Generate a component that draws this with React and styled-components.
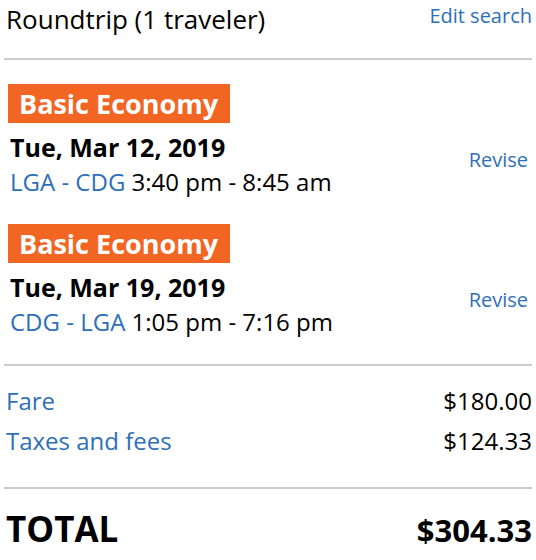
import React from 'react'
import styled, { createGlobalStyle } from 'styled-components'

const GlobalStyle = createGlobalStyle`
  body {
    margin: 0;
    background: #fff;
    font-family: "Open Sans", "Noto Sans", sans-serif;
    color: #000;
  }
`

const Page = styled.div`
  width: 536px;
  padding: 0 4px;
  box-sizing: border-box;
`

const Header = styled.div`
  display: flex;
  justify-content: space-between;
  align-items: flex-start;
  box-sizing: border-box;
  height: 58px;
  padding: 1px 0 0 2px;
`

const Title = styled.div`
  font-size: 26px;
  line-height: 36px;
`

const Link = styled.a`
  color: #2e6fb9;
  font-size: 20px;
  line-height: 28px;
  text-decoration: none;
  cursor: pointer;
`

const EditLink = styled(Link)`
  margin-top: 1px;
`

const Divider = styled.hr`
  margin: 0;
  border: none;
  height: 2px;
  background: #cccccc;
`

const Segments = styled.div`
  display: flex;
  flex-direction: column;
  gap: 25px;
  padding: 24px 0 25px 4px;
`

const Segment = styled.div`
  display: flex;
  justify-content: space-between;
  align-items: flex-start;
`

const Badge = styled.div`
  display: inline-block;
  background: #f26522;
  color: #fff;
  font-weight: 700;
  font-size: 27px;
  line-height: 39px;
  padding: 0 12px 0 11px;
`

const DateLine = styled.div`
  font-weight: 700;
  font-size: 25px;
  line-height: 36px;
  margin-top: 6px;
  padding-left: 2px;
`

const Route = styled.div`
  font-size: 24px;
  line-height: 34px;
  padding-left: 2px;
`

const Airports = styled.span`
  color: #2e6fb9;
`

const Revise = styled(Link)`
  margin-top: 62px;
  margin-right: 4px;
`

const Charges = styled.div`
  padding: 15px 0 26px 2px;
`

const ChargeRow = styled.div`
  display: flex;
  justify-content: space-between;
  font-size: 24px;
  line-height: 40px;
`

const ChargeLabel = styled.span`
  color: #2e6fb9;
`

const TotalRow = styled.div`
  display: flex;
  justify-content: space-between;
  align-items: baseline;
  font-weight: 700;
  line-height: 50px;
  padding: 15px 0 0 2px;
`

const TotalLabel = styled.span`
  font-size: 35px;
`

const TotalAmount = styled.span`
  font-size: 31px;
`

const segments = [
  { date: 'Tue, Mar 12, 2019', route: 'LGA - CDG', time: '3:40 pm - 8:45 am' },
  { date: 'Tue, Mar 19, 2019', route: 'CDG - LGA', time: '1:05 pm - 7:16 pm' },
]

const App = () => {
  return (
    <Page>
      <GlobalStyle />
      <Header>
        <Title>Roundtrip (1 traveler)</Title>
        <EditLink>Edit search</EditLink>
      </Header>
      <Divider />
      <Segments>
        {segments.map((s) => (
          <Segment key={s.date}>
            <div>
              <Badge>Basic Economy</Badge>
              <DateLine>{s.date}</DateLine>
              <Route>
                <Airports>{s.route}</Airports> {s.time}
              </Route>
            </div>
            <Revise>Revise</Revise>
          </Segment>
        ))}
      </Segments>
      <Divider />
      <Charges>
        <ChargeRow>
          <ChargeLabel>Fare</ChargeLabel>
          <span>$180.00</span>
        </ChargeRow>
        <ChargeRow>
          <ChargeLabel>Taxes and fees</ChargeLabel>
          <span>$124.33</span>
        </ChargeRow>
      </Charges>
      <Divider />
      <TotalRow>
        <TotalLabel>TOTAL</TotalLabel>
        <TotalAmount>$304.33</TotalAmount>
      </TotalRow>
    </Page>
  )
}

export default App
